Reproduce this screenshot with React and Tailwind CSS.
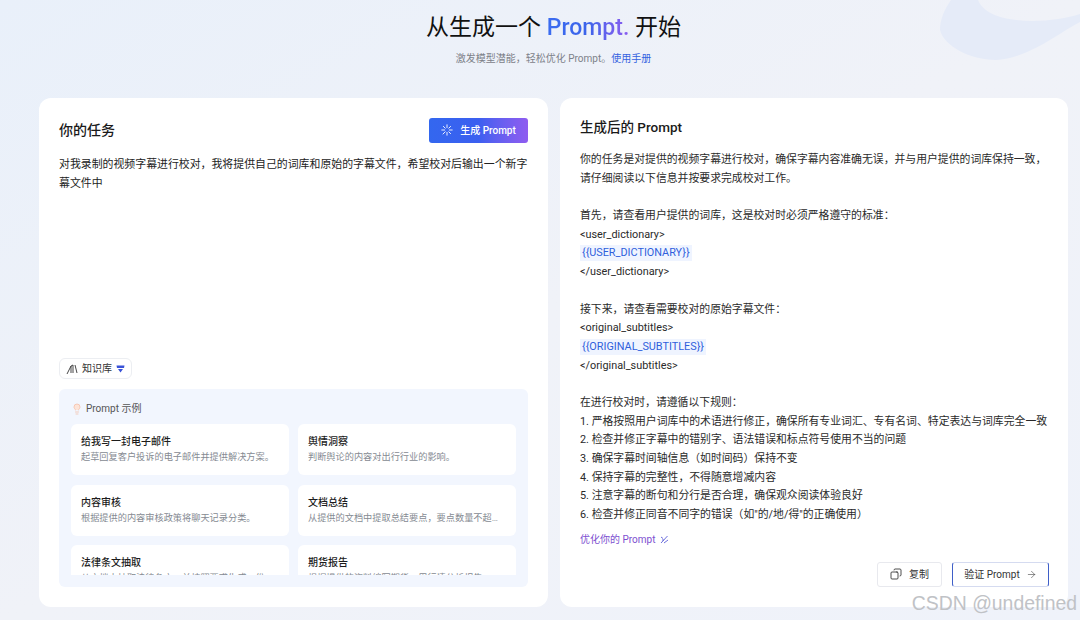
import React from "react";
import { Copy, ArrowRight, Lightbulb } from "lucide-react";

const font = "font-['Roboto','Noto_Sans_CJK_SC',sans-serif]";

const examples = [
  { title: "给我写一封电子邮件", desc: "起草回复客户投诉的电子邮件并提供解决方案。" },
  { title: "舆情洞察", desc: "判断舆论的内容对出行行业的影响。" },
  { title: "内容审核", desc: "根据提供的内容审核政策将聊天记录分类。" },
  { title: "文档总结", desc: "从提供的文档中提取总结要点，要点数量不超过五个，并保持简洁。" },
  { title: "法律条文抽取", desc: "从文档中抽取法律条文，并按照要求生成一份列表。" },
  { title: "期货报告", desc: "根据提供的资料编写期货一周行情分析报告。" },
];

const rules = [
  "1. 严格按照用户词库中的术语进行修正，确保所有专业词汇、专有名词、特定表达与词库完全一致",
  "2. 检查并修正字幕中的错别字、语法错误和标点符号使用不当的问题",
  "3. 确保字幕时间轴信息（如时间码）保持不变",
  "4. 保持字幕的完整性，不得随意增减内容",
  "5. 注意字幕的断句和分行是否合理，确保观众阅读体验良好",
  "6. 检查并修正同音不同字的错误（如\"的/地/得\"的正确使用）",
];

function Line({ children }) {
  return <div className="h-[18.7px] whitespace-nowrap">{children}</div>;
}

function Variable({ children }) {
  return (
    <div className="h-[18.7px]">
      <span className="inline-block h-[16px] bg-[#eff4ff] px-[2px] leading-[16px] text-[#2f5fdc]">{children}</span>
    </div>
  );
}

export default function App() {
  return (
    <div className={`relative h-[620px] w-[1080px] overflow-hidden bg-gradient-to-br from-[#e9f0fa] via-[#f0f2f8] to-[#eff2fa] ${font}`}>
      <svg className="absolute right-0 top-0" width="140" height="62" viewBox="0 0 140 62" fill="none">
        <path d="M11 0 C4 10 0 20 0 30 C4 46 30 60 56 60 C90 58 120 32 140 22 L140 14 C110 24 48 26 38 0 Z" fill="#e5ebf8" />
      </svg>

      <div className="relative ml-[39px] flex w-[1029px] flex-col">
        <header className="flex h-[98px] flex-col items-center">
          <h1 className="mt-[12px] h-[32px] text-[23px] font-normal leading-[32px] text-[#111]">
            从生成一个{" "}
            <span className="bg-gradient-to-r from-[#3b6cf0] via-[#3b63ea] to-[#8a5cf0] bg-clip-text font-medium text-transparent">Prompt.</span>{" "}
            开始
          </h1>
          <p className="mt-[7px] text-[10px] leading-[16px] text-[#7d8189]">
            激发模型潜能，轻松优化 Prompt。<span className="text-[#3563e0]">使用手册</span>
          </p>
        </header>

        <main className="flex h-[509px] gap-3">
          <section className="flex w-[509px] flex-col rounded-xl bg-white px-5 pb-5">
            <div className="flex h-[58px] shrink-0 items-center justify-between pt-[6px]">
              <h2 className="text-[14px] font-medium text-[#1a1a1a]">你的任务</h2>
              <button className="flex h-[25px] w-[99px] items-center justify-center gap-[7px] rounded-[3px] bg-gradient-to-r from-[#3367ef] via-[#3b5ff0] to-[#8f5cf0] text-[10px] font-medium text-white">
                <svg width="12" height="12" viewBox="0 0 12 12" fill="none" stroke="#fff" strokeWidth="0.9" strokeLinecap="round">
                  <path d="M6 0.8 V3.6 M6 8.4 V11.2 M0.8 6 H3.6 M8.4 6 H11.2 M2.4 2.4 L4.2 4.2 M7.8 7.8 L9.6 9.6 M9.6 2.4 L7.8 4.2 M4.2 7.8 L2 10" />
                </svg>
                生成 Prompt
              </button>
            </div>
            <p className="mt-[-1px] h-[203px] shrink-0 text-[10.9px] leading-[19px] text-[#222]">
              对我录制的视频字幕进行校对，我将提供自己的词库和原始的字幕文件，希望校对后输出一个新字幕文件中
            </p>
            <button className="flex h-[21px] w-[73px] items-center justify-center gap-[4px] rounded-[6px] border border-[#eceef2] text-[10px] text-[#333]">
              <svg width="12" height="12" viewBox="0 0 12 12" fill="none" stroke="#333" strokeWidth="0.9">
                <path d="M1 11 L5 3 L5 10 M5 3 L7 2 L7 10 M9 2 L11 10" />
              </svg>
              知识库
              <svg width="9" height="8" viewBox="0 0 9 8" fill="#3a53d8">
                <path d="M0.5 0.5 H8.5 L8 3 H1 Z M2 4 H7 L4.5 7.5 Z" />
              </svg>
            </button>
            <div className="mt-[10px] flex h-[198px] flex-col rounded-md bg-[#f2f6fe] px-3 pb-3">
              <div className="flex h-[35px] shrink-0 items-center gap-[3px] pt-[4px] text-[10px] text-[#555]">
                <Lightbulb size={12} strokeWidth={1.4} className="fill-[#fde4d8] text-[#f4b9a0]" />
                Prompt 示例
              </div>
              <div className="grid flex-1 grid-cols-2 content-start gap-x-[9px] gap-y-[9.5px] overflow-hidden">
                {examples.map((item) => (
                  <div key={item.title} className="h-[51px] rounded-md bg-white pl-[10px] pr-[12px] pt-[10px]">
                    <div className="text-[10px] font-medium leading-[15px] text-[#1c1c1c]">{item.title}</div>
                    <div className="truncate text-[9.2px] leading-[15px] text-[#858a92]">{item.desc}</div>
                  </div>
                ))}
              </div>
            </div>
          </section>

          <section className="flex flex-1 flex-col rounded-xl bg-white pl-5 pr-[19px]">
            <h2 className="mt-[19px] text-[13.5px] font-medium leading-[20px] text-[#1a1a1a]">生成后的 Prompt</h2>
            <div className="mt-[14px] text-[10.85px] leading-[18.7px] text-[#2a2a2a]">
              <Line>你的任务是对提供的视频字幕进行校对，确保字幕内容准确无误，并与用户提供的词库保持一致，</Line>
              <Line>请仔细阅读以下信息并按要求完成校对工作。</Line>
              <Line />
              <Line>首先，请查看用户提供的词库，这是校对时必须严格遵守的标准：</Line>
              <Line>{"<user_dictionary>"}</Line>
              <Variable>{"{{USER_DICTIONARY}}"}</Variable>
              <Line>{"</user_dictionary>"}</Line>
              <Line />
              <Line>接下来，请查看需要校对的原始字幕文件：</Line>
              <Line>{"<original_subtitles>"}</Line>
              <Variable>{"{{ORIGINAL_SUBTITLES}}"}</Variable>
              <Line>{"</original_subtitles>"}</Line>
              <Line />
              <Line>在进行校对时，请遵循以下规则：</Line>
              {rules.map((rule) => (
                <Line key={rule}>{rule}</Line>
              ))}
            </div>
            <div className="mt-[7px] flex items-center gap-[5px] text-[10px] leading-[16px] text-[#7d4fd0]">
              优化你的 Prompt
              <svg width="9" height="9" viewBox="0 0 9 9" fill="none" stroke="#5b5fd8" strokeWidth="0.9">
                <path d="M1 8 L7.5 1 M4 8 L8 5 M1 2 L3 3.5 M2 5 L4 5" />
              </svg>
            </div>
            <div className="mt-[14px] flex justify-end gap-[10px]">
              <button className="flex h-[25px] w-[65px] items-center justify-center gap-[7px] rounded-[3px] border border-[#e8e9ee] text-[10px] text-[#333]">
                <Copy size={12} strokeWidth={1.6} className="-scale-x-100 text-[#222]" />
                复制
              </button>
              <button className="flex h-[25px] w-[97px] items-center justify-center gap-[6px] rounded-[3px] border border-[#d5dbf0] border-l-[#3f5fc8] border-r-[#3f5fc8] text-[10px] text-[#333]">
                验证 Prompt
                <ArrowRight size={11} strokeWidth={1.2} />
              </button>
            </div>
          </section>
        </main>
      </div>

      <div className="absolute bottom-[7px] right-[3px] font-['Liberation_Sans',sans-serif] text-[19.4px] leading-[20px] text-[#c0c2c6]">
        CSDN @undefined
      </div>
    </div>
  );
}
